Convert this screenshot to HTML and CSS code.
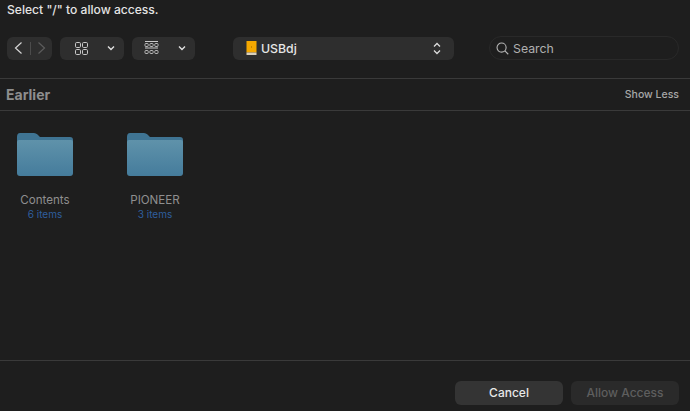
FILE: index.html
```html
<!DOCTYPE html>
<html lang="en">
<head>
<meta charset="utf-8">
<title>Select access</title>
<link rel="stylesheet" href="styles.css">
</head>
<body>
<div class="dialog">
  <div class="title">Select "/" to allow access.</div>
  <div class="toolbar">
    <div class="pill nav">
      <svg class="nav-icon" width="11" height="14" viewBox="0 0 11 14"><path d="M8.5 1.5 L2.5 7 L8.5 12.5" fill="none" stroke="#d6d6d6" stroke-width="1.2"/></svg>
      <span class="nav-sep"></span>
      <svg class="nav-icon" width="11" height="14" viewBox="0 0 11 14"><path d="M2.5 1.5 L8.5 7 L2.5 12.5" fill="none" stroke="#5c5c5c" stroke-width="1.2"/></svg>
    </div>
    <div class="pill view">
      <svg width="13" height="13" viewBox="0 0 13 13" fill="none" stroke="#c8c8c8" stroke-width="1"><rect x="0.5" y="0.5" width="5" height="5" rx="1.2"/><rect x="7.5" y="0.5" width="5" height="5" rx="1.2"/><rect x="0.5" y="7.5" width="5" height="5" rx="1.2"/><rect x="7.5" y="7.5" width="5" height="5" rx="1.2"/></svg>
      <svg width="8" height="6" viewBox="0 0 8 6"><path d="M1 1.5 L4 4.5 L7 1.5" fill="none" stroke="#e0e0e0" stroke-width="1.4"/></svg>
    </div>
    <div class="pill view group">
      <svg width="15" height="14" viewBox="0 0 15 14" fill="none" stroke="#c8c8c8" stroke-width="0.9"><path d="M1 0.5 H14 M1 7 H14" stroke-width="1"/><rect x="1" y="2.5" width="3.2" height="3" rx="0.8"/><rect x="5.9" y="2.5" width="3.2" height="3" rx="0.8"/><rect x="10.8" y="2.5" width="3.2" height="3" rx="0.8"/><rect x="1" y="9.5" width="3.2" height="3" rx="0.8"/><rect x="5.9" y="9.5" width="3.2" height="3" rx="0.8"/><rect x="10.8" y="9.5" width="3.2" height="3" rx="0.8"/></svg>
      <svg width="8" height="6" viewBox="0 0 8 6"><path d="M1 1.5 L4 4.5 L7 1.5" fill="none" stroke="#e0e0e0" stroke-width="1.4"/></svg>
    </div>
    <div class="pill path">
      <svg class="drive" width="11" height="14" viewBox="0 0 11 14"><rect x="0.5" y="0" width="10" height="11.5" fill="#f5a800"/><rect x="0.5" y="11.5" width="10" height="2.5" fill="#d9d0bd"/><rect x="5" y="5" width="1" height="2" fill="#c98600"/></svg>
      <span class="path-name">USBdj</span>
      <svg class="updown" width="8" height="13" viewBox="0 0 8 13"><path d="M1 4.5 L4 1.5 L7 4.5 M1 8.5 L4 11.5 L7 8.5" fill="none" stroke="#dcdcdc" stroke-width="1.3"/></svg>
    </div>
    <div class="search">
      <svg width="13" height="13" viewBox="0 0 14 14" fill="none" stroke="#b4b4b4" stroke-width="1.2"><circle cx="6" cy="6" r="4.9"/><path d="M9.6 9.6 L13.2 13.2"/></svg>
      <span>Search</span>
    </div>
  </div>
  <div class="section-head">
    <span class="section-title">Earlier</span>
    <span class="show-less">Show Less</span>
  </div>
  <div class="files">
    <div class="file">
      <svg class="folder" width="58" height="46" viewBox="0 0 58 46"><use href="#folder-shape"/></svg>
      <div class="file-name">Contents</div>
      <div class="file-meta">6 items</div>
    </div>
    <div class="file">
      <svg class="folder" width="58" height="46" viewBox="0 0 58 46"><use href="#folder-shape"/></svg>
      <div class="file-name">PIONEER</div>
      <div class="file-meta">3 items</div>
    </div>
  </div>
  <div class="footer">
    <div class="btn cancel">Cancel</div>
    <div class="btn allow">Allow Access</div>
  </div>
</div>
<svg class="defs" width="0" height="0">
  <defs>
    <linearGradient id="front" x1="0" y1="0" x2="0" y2="1"><stop offset="0" stop-color="#5f92aa"/><stop offset="1" stop-color="#457c9c"/></linearGradient>
    <g id="folder-shape">
      <path d="M1 6 Q1 2 4 2 H18 Q20 2 21.5 3.5 L24 6 H54 Q57 6 57 9 V20 H1 Z" fill="#3f7493"/>
      <path d="M1 11 Q1 9 3 9 H55 Q57 9 57 11 V42 Q57 45 54 45 H4 Q1 45 1 42 Z" fill="url(#front)"/>
    </g>
  </defs>
</svg>
</body>
</html>
```

FILE: styles.css
```css
* { box-sizing: border-box; }
html, body { margin: 0; padding: 0; }
body {
  width: 690px;
  height: 411px;
  overflow: hidden;
  background: #1e1e1e;
  font-family: "Inter", "Liberation Sans", sans-serif;
}
.dialog { display: flex; flex-direction: column; height: 411px; }
.title {
  height: 36px;
  padding: 2px 0 0 7px;
  font-size: 12.1px;
  line-height: 16px;
  font-weight: 500;
  color: #e4e4e4;
}
.toolbar {
  display: flex;
  align-items: center;
  height: 24px;
  padding-left: 7px;
}
.pill {
  display: flex;
  align-items: center;
  height: 23px;
  background: #2e2e2e;
  border-radius: 6px;
}
.nav { width: 45px; justify-content: space-between; padding: 0 5px 0 6px; margin-right: 8px; }
.nav-sep { width: 1px; height: 13px; background: #4c4c4c; }
.view { width: 64px; justify-content: space-between; padding: 0 9px 0 15px; margin-right: 8px; }
.group { width: 63px; padding-left: 12px; margin-right: 38px; }
.path { width: 221px; padding: 0 13px 0 13px; margin-right: 35px; }
.drive { margin-right: 4px; }
.path-name { flex: 1; font-size: 12.3px; color: #e6e6e6; font-weight: 500; }
.search {
  display: flex;
  align-items: center;
  gap: 4px;
  width: 190px;
  height: 24px;
  padding-left: 6px;
  border: 1px solid #292929;
  border-radius: 12px;
  font-size: 12.3px;
  color: #b0b0b0;
}
.section-head {
  display: flex;
  justify-content: space-between;
  align-items: center;
  height: 33px;
  margin-top: 18px;
  padding: 0 11px 0 6px;
  border-top: 1px solid #3a3a3a;
  border-bottom: 1px solid #3a3a3a;
}
.section-title { font-size: 14px; font-weight: 700; color: #8e8e8e; }
.show-less { font-size: 10.5px; font-weight: 500; color: #a8a8a8; }
.files {
  flex: 1;
  display: flex;
  gap: 20px;
  padding: 20px 0 0 0;
}
.file { width: 90px; display: flex; flex-direction: column; align-items: center; }
.folder { margin-bottom: 16px; display: block; }
.file-name { font-size: 11.6px; line-height: 15px; color: #8f8f8f; }
.file-meta { font-size: 10px; line-height: 13px; color: #2f5f9f; }
.footer {
  display: flex;
  justify-content: flex-end;
  gap: 8px;
  height: 51px;
  padding: 20px 11px 0 0;
  border-top: 1px solid #3a3a3a;
}
.btn {
  width: 108px;
  height: 24px;
  border-radius: 6px;
  text-align: center;
  font-size: 12px;
  line-height: 24px;
  font-weight: 500;
}
.cancel { background: #343434; color: #e8e8e8; }
.allow { background: #2a2a2a; color: #5e5e5e; }
.defs { position: absolute; }
```
